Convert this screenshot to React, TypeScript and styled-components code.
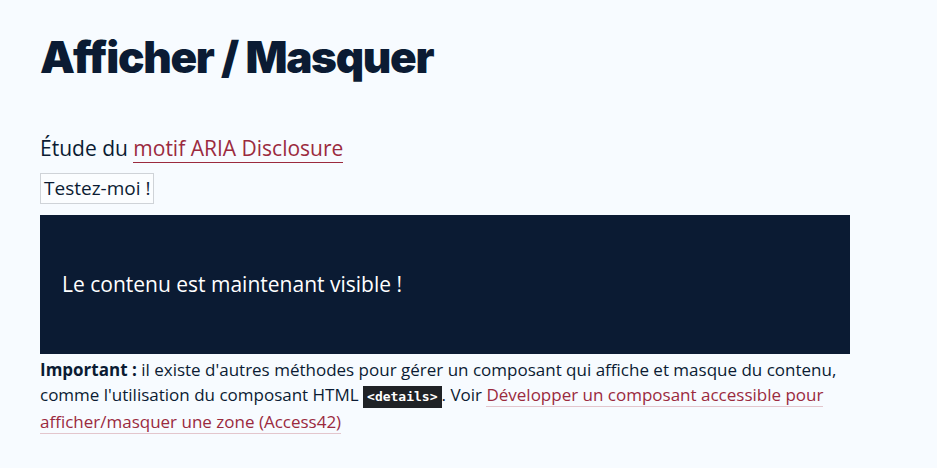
import React, { FC, useState } from 'react';
import styled, { createGlobalStyle } from 'styled-components';

const GlobalStyle = createGlobalStyle`
  html, body {
    margin: 0;
    padding: 0;
    background: #f7fbff;
    color: #0b1b33;
    font-family: "Open Sans", Lato, sans-serif;
  }
`;

const Page = styled.main`
  padding: 26px 40px 30px;
  max-width: 810px;
`;

const Title = styled.h1`
  margin: 0 0 46px;
  font-family: Inter, sans-serif;
  font-weight: 900;
  font-size: 44px;
  line-height: 62px;
  letter-spacing: -1.3px;
  color: #0b1b33;
`;

const Intro = styled.p`
  margin: 0 0 11px;
  font-size: 21px;
  line-height: 28px;
`;

const Link = styled.a<{ $strong?: boolean }>`
  color: #9b2a3e;
  text-decoration: none;
  border-bottom: 1px solid ${(p) => (p.$strong ? '#9b2a3e' : '#e3c6cd')};
  padding-bottom: 0;
`;

const Toggle = styled.button`
  display: block;
  margin: 0 0 11px;
  padding: 3px 3px;
  background: #fbfdff;
  border: 1px solid #cfd3d8;
  font-family: "Open Sans", sans-serif;
  font-size: 19px;
  line-height: 23px;
  color: #0b1b33;
  cursor: pointer;
`;

const Panel = styled.div`
  background: #0b1b33;
  color: #ffffff;
  padding: 56px 22px;
  font-size: 21px;
  line-height: 27px;
`;

const Note = styled.p`
  margin: 3px 0 0;
  font-size: 17px;
  line-height: 25px;
`;

const Code = styled.code`
  background: #1f2226;
  color: #ffffff;
  font-family: "DejaVu Sans Mono", monospace;
  font-weight: bold;
  font-size: 13px;
  padding: 3px 4px 4px;
`;

const App: FC = () => {
  const [open, setOpen] = useState(true);
  return (
    <>
      <GlobalStyle />
      <Page>
        <Title>Afficher / Masquer</Title>
        <Intro>
          Étude du <Link $strong href="#">motif ARIA Disclosure</Link>
        </Intro>
        <Toggle aria-expanded={open} onClick={() => setOpen(!open)}>
          Testez-moi !
        </Toggle>
        {open && <Panel>Le contenu est maintenant visible !</Panel>}
        <Note>
          <strong>Important :</strong> il existe d'autres méthodes pour gérer un composant qui affiche et
          masque du contenu, comme l'utilisation du composant HTML <Code>&lt;details&gt;</Code>. Voir{' '}
          <Link href="#">Développer un composant accessible pour afficher/masquer une zone (Access42)</Link>
        </Note>
      </Page>
    </>
  );
};

export default App;
